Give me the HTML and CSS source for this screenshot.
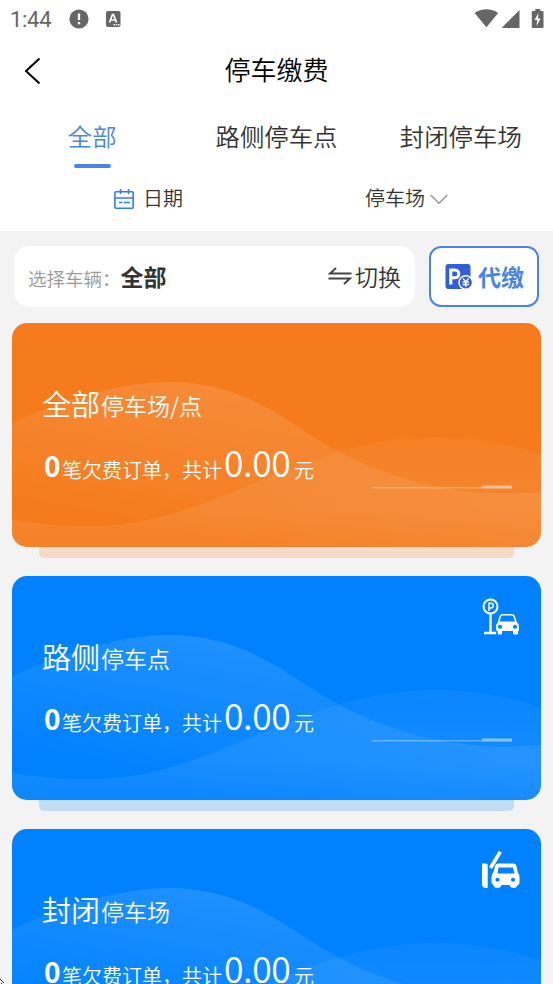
FILE: index.html
```html
<!DOCTYPE html>
<html lang="zh-CN">
<head>
<meta charset="utf-8">
<title>停车缴费</title>
<link rel="stylesheet" href="styles.css">
</head>
<body>
<svg width="0" height="0" class="defs">
  <defs>
    <linearGradient id="hill" gradientUnits="userSpaceOnUse" x1="240" y1="60" x2="210" y2="220">
      <stop offset="0" stop-color="#fff" stop-opacity=".13"/>
      <stop offset="1" stop-color="#fff" stop-opacity="0"/>
    </linearGradient>
    <linearGradient id="swell" x1="0" y1="0" x2="0" y2="1">
      <stop offset="0" stop-color="#fff" stop-opacity=".04"/>
      <stop offset=".65" stop-color="#fff" stop-opacity=".08"/>
      <stop offset="1" stop-color="#fff" stop-opacity=".05"/>
    </linearGradient>
    <symbol id="waves" viewBox="0 0 529 224">
      <path fill="url(#hill)" d="M0 101C47 78 105 59 160 59C214 60 249 79 294 109C331 133 364 149 416 162C454 171 495 172 529 169V224H0Z"/>
      <path fill="url(#swell)" d="M0 197C26 201 54 204 88 203C146 201 194 180 235 163C300 137 350 114 424 114C463 114 497 121 529 131V224H0Z"/>
      <path stroke="#fff" stroke-opacity=".45" d="M360 164.800H470"/>
      <path stroke="#fff" stroke-opacity=".5" stroke-width="3" d="M470 164H500"/>
    </symbol>
  </defs>
</svg>
<header class="top">
  <div class="status">
    <span class="clock">1:44</span>
    <svg class="alert" width="20" height="20" viewBox="0 0 20 20"><circle cx="10" cy="10" r="9.600" fill="#666"/><path d="M10 4.500v6.500M10 13v2.300" stroke="#fff" stroke-width="2.300"/></svg>
    <svg class="lang" width="15" height="16" viewBox="0 0 15 16"><rect width="14.500" height="16" rx="2" fill="#666"/><path d="M3.500 11.500 6.500 3.500h1l3 8M4.700 9h4.700" fill="none" stroke="#fff" stroke-width="1.700"/><path d="M7.500 13.800h6" stroke="#fff" stroke-width="1.400" stroke-dasharray="1.400 .9"/></svg>
    <svg class="signals" width="70" height="21" viewBox="0 0 70 21"><path fill="#666" d="M.6 5C7.500.1 17.200.1 24.200 5L12.400 19.300ZM28.500 20V19L45.500 2v18ZM58.300 3h3V1h5v2h2.200q1 0 1 1v15q0 1-1 1H58.800q-1 0-1-1V4q0-1 .5-1Z"/><path fill="#fff" d="m64.500 5-4 7h2.600l-.5 6 4-7.500H64Z"/></svg>
  </div>
  <div class="nav">
    <svg class="back" width="18" height="28" viewBox="0 0 18 28"><path d="M15.500 1.500 2 14 15.500 26.500" fill="none" stroke="#000" stroke-width="2"/></svg>
    <h1>停车缴费</h1>
  </div>
  <nav class="tabs"><a class="active">全部</a><a>路侧停车点</a><a>封闭停车场</a></nav>
  <div class="filters">
    <div class="date"><svg width="20" height="20" viewBox="0 0 20 20" fill="none" stroke="#2f7bff" stroke-width="1.600"><rect x=".9" y="2.800" width="18.300" height="16.400" rx="1"/><path d="M1 9h18M6.500 0v5M14.500 0v5M5 13.500h3.500M10 13.500h6"/></svg>日期</div>
    <div class="lot">停车场<svg width="18" height="11" viewBox="0 0 18 11" fill="none" stroke="#929599" stroke-width="1.400"><path d="m.7 1 8.300 8.300L17.300 1"/></svg></div>
  </div>
</header>
<main>
  <div class="vehicle">
    <div class="picker"><span class="label">选择车辆：</span><b>全部</b><span class="switch"><svg width="24" height="18" viewBox="0 0 24 18" fill="none" stroke="#444" stroke-width="2"><path d="M23.500 6.500H2L8 1M.5 11.500H22L16 17"/></svg>切换</span></div>
    <div class="proxy"><svg width="28" height="28" viewBox="0 0 28 28"><rect x=".5" y="1" width="25" height="25" rx="3" fill="#305fd5"/><path d="M5.800 21.500V7h4.200a3.700 3.700 0 0 1 0 7.800H6" fill="none" stroke="#fff" stroke-width="3"/><circle cx="20.800" cy="19.500" r="6.800" fill="#305fd5" stroke="#fff" stroke-width="1.500"/><path d="m18 15.500 2.800 3.500 2.800-3.500M20.800 19v5M17.500 19.200h6.600M17.500 21.500h6.600" fill="none" stroke="#fff" stroke-width="1.300"/></svg><span>代缴</span></div>
  </div>
  <section class="card orange">
    <svg class="art"><use href="#waves"/></svg>
    <h2>全部<small>停车场/点</small></h2>
    <p><b>0</b><span>笔欠费订单，共计</span><strong>0.00</strong><span>元</span></p>
  </section>
  <section class="card">
    <svg class="art"><use href="#waves"/></svg>
    <svg class="kind" width="38" height="38" viewBox="0 0 38 38" fill="none" stroke="#fff"><circle cx="8.500" cy="8.500" r="7" stroke-width="2"/><path d="M7 13V5.200h2a2.200 2.200 0 0 1 0 4.700H7" stroke-width="1.500"/><path d="M8.500 16v18M2 35h12" stroke-width="2.300"/><path d="m16.500 24 2-6q.6-1.200 2-1.200H30q1.400 0 2 1.200l2 6" stroke-width="1.600"/><path fill="#fff" stroke="none" fill-rule="evenodd" d="M17 23.500h17q3 2 3 5V32q0 1-1 1v2q0 1.500-1.500 1.500h-2Q31 36.500 31 35v-2H20v2q0 1.500-1.500 1.500h-1.500Q15.500 36.500 15.500 35v-2Q14 33 14 31v-2.500q0-3 3-5Zm1 3.200a2 2 0 1 0 .01 0Zm15 0a2 2 0 1 0 .01 0Z"/></svg>
    <h2>路侧<small>停车点</small></h2>
    <p><b>0</b><span>笔欠费订单，共计</span><strong>0.00</strong><span>元</span></p>
  </section>
  <section class="card">
    <svg class="art"><use href="#waves"/></svg>
    <svg class="kind" width="38" height="38" viewBox="0 0 38 38"><path fill="#fff" d="M0 12.500h4q1.700 0 1.700 2V37H4Q0 37 0 33Z"/><path d="M8.500 17 18.300.8" stroke="#fff" stroke-width="3.600"/><path fill="#fff" fill-rule="evenodd" d="M16 12.500h15q3 0 3.600 3l1.200 6q1.700 2 1.700 5V31q0 3-2 3-.5 3-4 3-3 0-4-3h-8q-1 3-4 3-3.500 0-4-3-2-1-2-3v-5q0-3 2-5l1.500-6q.7-2.500 3-2.500Zm.5 4-1 6h17l-1.500-6Zm-1 10.300a2 2 0 1 0 .01 0Zm15.500 0a2 2 0 1 0 .01 0Z"/></svg>
    <h2>封闭<small>停车场</small></h2>
    <p><b>0</b><span>笔欠费订单，共计</span><strong>0.00</strong><span>元</span></p>
  </section>
</main>
<svg class="corner" width="5" height="5" viewBox="0 0 5 5"><path d="M0 .5h1M1 1.500h1M2 2.500h1M3 3.500h1M1 4.500h1" stroke="#222"/></svg>
</body>
</html>
```
FILE: styles.css
```css
* { box-sizing: border-box; }
html, body { margin: 0; height: 984px; overflow: hidden; }
body { background: #f3f3f3; color: #333; font-family: "Noto Sans CJK SC", sans-serif; font-weight: 350; position: relative; }
h1, h2, p { margin: 0; font-weight: 350; }
b { font-weight: 700; }
svg { display: block; flex: none; }
.defs { position: absolute; }
.corner { position: absolute; left: 0; bottom: 0; }
.top { height: 231px; background: #fff; }
.status { height: 38px; display: flex; align-items: center; padding: 0 9px 0 10px; }
.clock { font: 22px/38px Roboto, sans-serif; color: #666; width: 59px; letter-spacing: -.3px; padding-top: 1px; }
.alert { margin-top: -1px; }
.lang { margin-left: 17px; margin-top: -1px; }
.signals { margin-left: auto; margin-right: 0; margin-top: -2px; }
.nav { height: 64px; display: grid; grid-template-columns: 60px 1fr 60px; align-items: center; }
.back { margin-left: 24px; margin-top: 2px; }
h1 { color: #000; font-size: 26px; line-height: 38px; text-align: center; margin-top: -2px; }
.tabs { display: grid; grid-template-columns: repeat(3, 1fr); height: 66px; font-size: 24.400px; line-height: 36px; text-align: center; padding-top: 16px; }
.tabs a { display: flex; flex-direction: column; align-items: center; }
.tabs .active { color: #4884e8; }
.active::after { content: ""; width: 37px; height: 4px; border-radius: 2px; background: #4884e8; margin-top: 10px; }
.filters { display: flex; height: 58px; font-size: 20px; line-height: 30px; padding: 15px 0 0 114px; }
.date, .lot { display: flex; align-items: center; height: 30px; }
.date { width: 251px; gap: 9px; }
.date svg { margin-top: 2px; }
.lot { gap: 5px; }
.lot svg { margin-top: 2px; }
main { padding: 15px 12px 0; }
.vehicle { display: flex; gap: 14px; height: 61px; padding: 0 2px; margin-bottom: 16px; }
.picker { width: 401px; background: #fff; border-radius: 15px; display: flex; align-items: center; padding: 0 14px; }
.label { color: #999; font-size: 18.500px; padding-top: 2px; }
.picker b { font-size: 23px; margin-top: -1px; }
.switch { margin-left: auto; display: flex; align-items: center; gap: 3px; font-size: 23px; margin-top: -1px; }
.proxy { flex: 1; border: 2px solid #4884e8; border-radius: 12px; background: #fff; color: #4884e8; font-weight: 700; font-size: 23px; display: flex; align-items: center; padding-left: 14px; gap: 5px; }
.proxy span { margin-top: -2px; }
.card { position: relative; height: 224px; margin-bottom: 29px; padding: 61px 0 0 30px; color: #fff; background: #0081ff; border-radius: 15px; }
.card::after { content: ""; position: absolute; left: 27px; right: 27px; top: 224px; height: 11px; border-radius: 0 0 5px 5px; background: #c3dcf6; }
.orange { background: #f57b1d; }
.orange::after { background: #f4dac8; }
.art { position: absolute; inset: 0; width: 529px; height: 224px; border-radius: 15px; }
.kind { position: absolute; right: 21px; top: 22px; }
h2 { position: relative; font-size: 29px; line-height: 38px; }
h2 small { font-size: 23px; margin-left: 1px; position: relative; top: -1px; }
p { position: relative; display: flex; align-items: baseline; font-size: 20px; line-height: 44px; margin-top: 16px; padding-left: 2px; }
p b { font-size: 28px; width: 18px; position: relative; top: -1px; }
p strong { font-size: 35.500px; font-weight: 350; width: 70px; margin: 0 0 0 2px; position: relative; top: -1px; letter-spacing: -.4px; }
```
